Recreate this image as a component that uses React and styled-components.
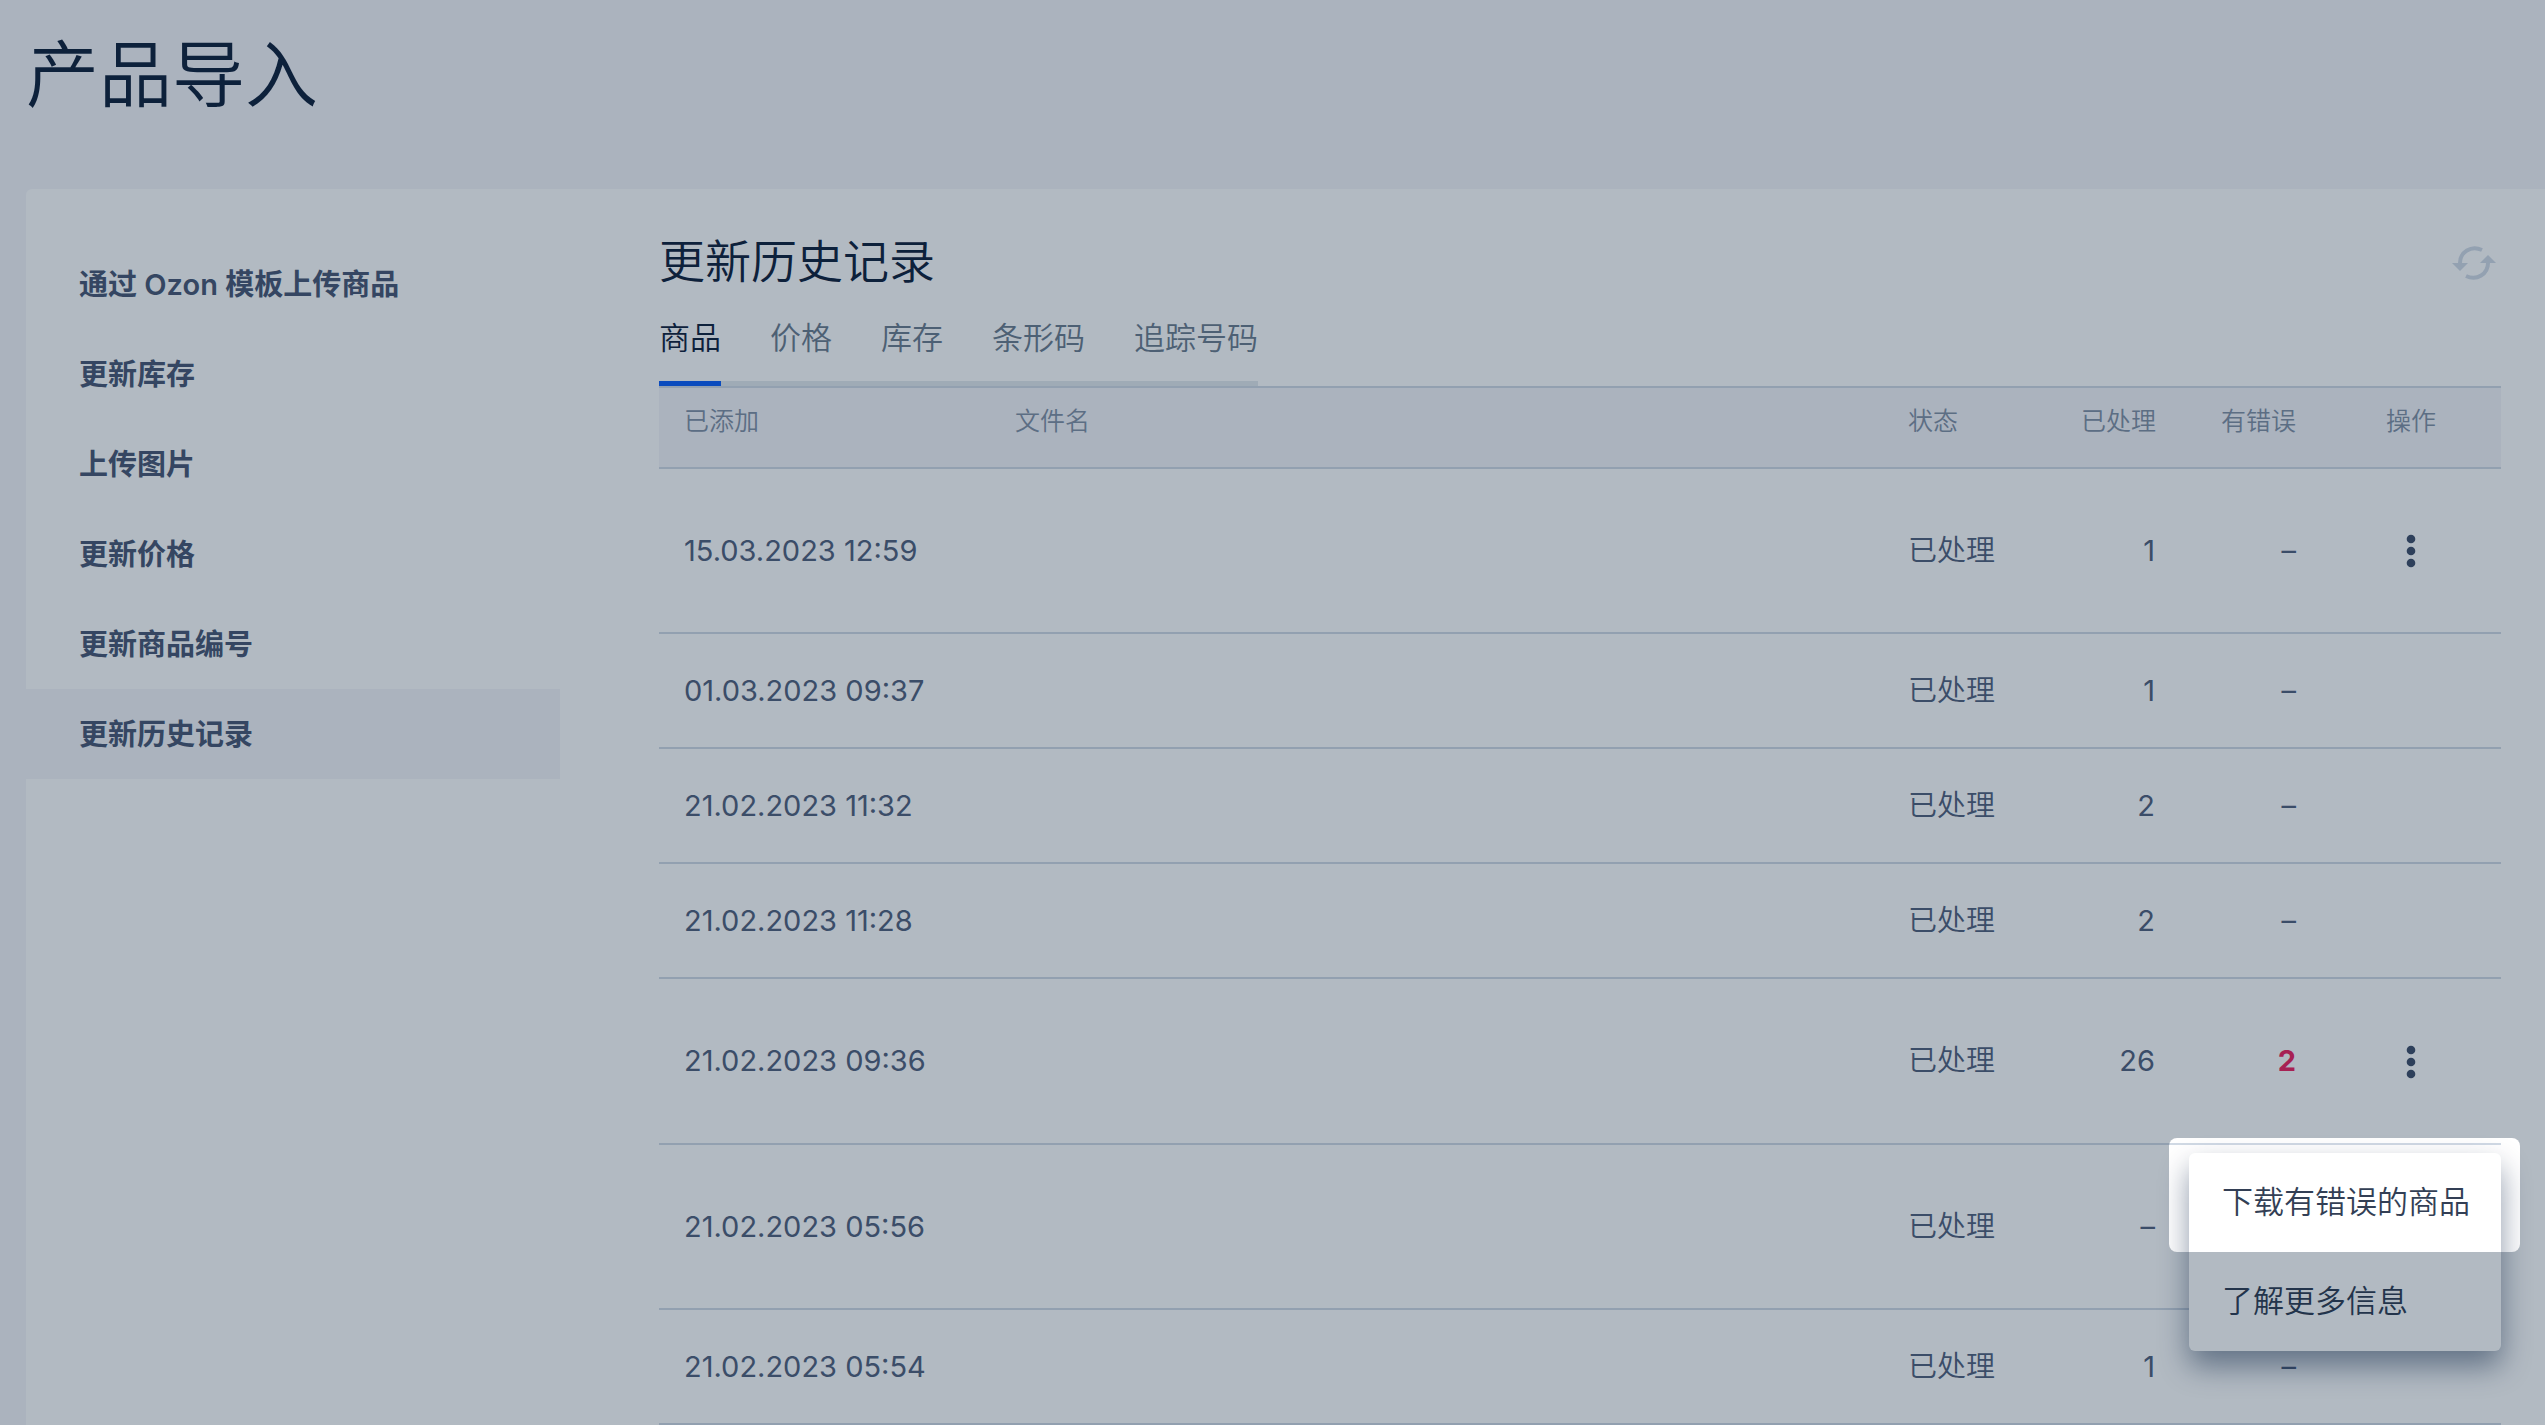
import React, { useState } from "react";
import styled, { createGlobalStyle } from "styled-components";

const GlobalStyle = createGlobalStyle`
  * {
    box-sizing: border-box;
  }

  html,
  body,
  #root {
    height: 100%;
  }

  body {
    margin: 0;
    overflow: hidden;
    background: #f5f5fa;
    color: #14243e;
    font-family: Inter, "Noto Sans CJK SC", sans-serif;
  }
`;

const Page = styled.div`
  display: flex;
  flex-direction: column;
  min-height: 100%;
  padding-left: 26px;
`;

const PageTitle = styled.h1`
  margin: 0;
  padding: 20px 0 59px;
  font-size: 73px;
  line-height: 110px;
  font-weight: 350;
`;

const Card = styled.div`
  display: flex;
  flex: 1;
  background: #fff;
  border-radius: 6px 0 0 0;
`;

const SideNav = styled.nav`
  display: flex;
  flex-direction: column;
  flex: 0 0 534px;
  padding-top: 50px;
`;

const NavLink = styled.a`
  height: 90px;
  padding-left: 53px;
  font-size: 29px;
  line-height: 91px;
  font-weight: 600;
  color: #4c5a76;
  text-decoration: none;
  background: ${(props) => (props.$active ? "#f5f5fa" : "transparent")};
`;

const Main = styled.main`
  flex: 1;
  min-width: 0;
  padding: 42px 44px 0 99px;
`;

const TitleRow = styled.div`
  display: flex;
  align-items: center;
  justify-content: space-between;
  height: 64px;
`;

const SectionTitle = styled.h2`
  margin: 0;
  padding-bottom: 4px;
  font-size: 46px;
  line-height: 60px;
  font-weight: 350;
`;

const IconButton = styled.button`
  display: inline-flex;
  padding: 4px;
  border: none;
  background: none;
  vertical-align: middle;
  color: ${(props) => props.$color};
  cursor: pointer;
`;

const Tabs = styled.div`
  display: inline-flex;
  gap: 49px;
  height: 91px;
  vertical-align: top;
  box-shadow: inset 0 -5px 0 #e4eaee;
`;

const Tab = styled.button`
  padding: 0 0 6px;
  border: none;
  border-bottom: 5px solid ${(props) => (props.$active ? "#0f60f9" : "transparent")};
  background: none;
  font-family: inherit;
  font-size: 31px;
  font-weight: 350;
  color: ${(props) => (props.$active ? "#14243e" : "#6f7e90")};
  cursor: pointer;
`;

const Table = styled.table`
  width: 100%;
  table-layout: fixed;
  border-collapse: separate;
  border-spacing: 0;
`;

const Col = styled.col`
  width: ${(props) => props.$width || "auto"};
`;

const HeadCell = styled.th`
  height: 83px;
  padding: 15px 25px 0;
  vertical-align: top;
  border: solid #d1dae5;
  border-width: 2px 0;
  background: #f5f5fa;
  font-size: 25px;
  line-height: 36px;
  font-weight: 350;
  white-space: nowrap;
  text-align: ${(props) => props.$align || "left"};
  color: #8592a6;
`;

const Cell = styled.td`
  position: relative;
  height: ${(props) => props.$height}px;
  padding: 0 25px;
  border-bottom: 2px solid #d1dae5;
  font-size: 29px;
  line-height: 40px;
  font-weight: ${(props) => (props.$light ? 350 : 400)};
  text-align: ${(props) => props.$align || "left"};
  color: #55637f;
`;

const ErrorCount = styled.strong`
  font-weight: 700;
  color: #f02561;
`;

const Menu = styled.div`
  position: absolute;
  z-index: 1;
  top: calc(100% + 10px);
  right: 0;
  width: 312px;
  border-radius: 6px;
  background: #fff;
  box-shadow: 0 15px 30px rgba(0, 26, 64, 0.45);
`;

const MenuItem = styled.button`
  display: block;
  width: 100%;
  height: 99px;
  padding: 0 0 6px 33px;
  border: none;
  background: none;
  font-family: inherit;
  font-size: 31px;
  font-weight: 350;
  text-align: left;
  white-space: nowrap;
  color: #333f55;
  cursor: pointer;
`;

/* dims the whole page and leaves the first menu item lit */
const Spotlight = styled.div`
  position: absolute;
  top: -15px;
  right: -19px;
  bottom: 99px;
  left: -20px;
  border-radius: 8px;
  box-shadow: 0 0 0 4000px rgba(0, 26, 52, 0.3);
  pointer-events: none;
`;

const RefreshIcon = () => (
  <svg width="46" height="34" viewBox="0 0 46 34" fill="none">
    <path d="M31 4 C20 -1 9 6 9 17" stroke="currentColor" strokeWidth="4" />
    <path d="M1 17 H17 L9 25 Z" fill="currentColor" />
    <path d="M15 30 C26 35 37 28 37 17" stroke="currentColor" strokeWidth="4" />
    <path d="M45 17 H29 L37 9 Z" fill="currentColor" />
  </svg>
);

const DotsIcon = () => (
  <svg width="10" height="34" viewBox="0 0 10 34" fill="currentColor">
    <circle cx="5" cy="5" r="4.300" />
    <circle cx="5" cy="17" r="4.300" />
    <circle cx="5" cy="29" r="4.300" />
  </svg>
);

const links = [
  "通过 Ozon 模板上传商品",
  "更新库存",
  "上传图片",
  "更新价格",
  "更新商品编号",
  "更新历史记录",
];

const tabs = ["商品", "价格", "库存", "条形码", "追踪号码"];

const rows = [
  { date: "15.03.2023 12:59", done: "1", errors: "–", actions: true, height: 165 },
  { date: "01.03.2023 09:37", done: "1", errors: "–", height: 115 },
  { date: "21.02.2023 11:32", done: "2", errors: "–", height: 115 },
  { date: "21.02.2023 11:28", done: "2", errors: "–", height: 115 },
  { date: "21.02.2023 09:36", done: "26", errors: "2", failed: true, actions: true, height: 166 },
  { date: "21.02.2023 05:56", done: "–", height: 165 },
  { date: "21.02.2023 05:54", done: "1", errors: "–", height: 115 },
];

const HistoryRow = ({ row }) => (
  <tr>
    <Cell $height={row.height}>{row.date}</Cell>
    <Cell />
    <Cell $light>已处理</Cell>
    <Cell $align="right">{row.done}</Cell>
    <Cell $align="right">{row.failed ? <ErrorCount>{row.errors}</ErrorCount> : row.errors}</Cell>
    <Cell $align="center">
      {row.actions && (
        <IconButton $color="#43516c" aria-label="操作">
          <DotsIcon />
        </IconButton>
      )}
      {row.failed && (
        <Menu>
          <MenuItem>下载有错误的商品</MenuItem>
          <MenuItem>了解更多信息</MenuItem>
          <Spotlight />
        </Menu>
      )}
    </Cell>
  </tr>
);

const App = () => {
  const [tab, setTab] = useState(tabs[0]);

  return (
    <>
      <GlobalStyle />
      <Page>
        <PageTitle>产品导入</PageTitle>
        <Card>
          <SideNav>
            {links.map((link, i) => (
              <NavLink key={link} href="#" $active={i === links.length - 1}>
                {link}
              </NavLink>
            ))}
          </SideNav>
          <Main>
            <TitleRow>
              <SectionTitle>更新历史记录</SectionTitle>
              <IconButton $color="#d3dbe7" aria-label="刷新">
                <RefreshIcon />
              </IconButton>
            </TitleRow>
            <Tabs role="tablist">
              {tabs.map((name) => (
                <Tab
                  key={name}
                  role="tab"
                  aria-selected={name === tab}
                  $active={name === tab}
                  onClick={() => setTab(name)}
                >
                  {name}
                </Tab>
              ))}
            </Tabs>
            <Table>
              <colgroup>
                <Col $width="331px" />
                <Col />
                <Col $width="173px" />
                <Col $width="124px" />
                <Col $width="141px" />
                <Col $width="180px" />
              </colgroup>
              <thead>
                <tr>
                  <HeadCell>已添加</HeadCell>
                  <HeadCell>文件名</HeadCell>
                  <HeadCell>状态</HeadCell>
                  <HeadCell $align="right">已处理</HeadCell>
                  <HeadCell $align="right">有错误</HeadCell>
                  <HeadCell $align="center">操作</HeadCell>
                </tr>
              </thead>
              <tbody>
                {rows.map((row) => (
                  <HistoryRow key={row.date} row={row} />
                ))}
              </tbody>
            </Table>
          </Main>
        </Card>
      </Page>
    </>
  );
};

export default App;
